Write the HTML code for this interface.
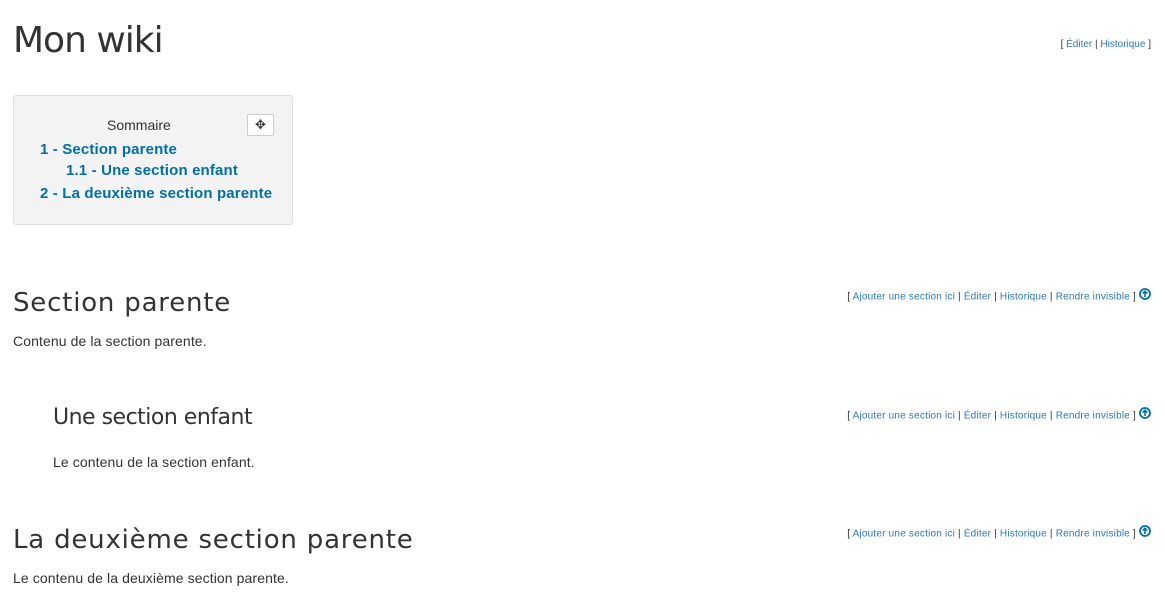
<!DOCTYPE html>
<html><head><meta charset="utf-8"><style>
body{margin:0;background:#fff;font-family:"Liberation Sans",sans-serif;color:#333;font-size:14px;width:1165px;height:603px;position:relative;overflow:hidden}
.a{position:absolute}
a{color:#0070a8;text-decoration:none}
h1,h2,h3{margin:0;font-family:"DejaVu Sans",sans-serif;font-weight:normal;color:#333;white-space:nowrap}
.act{position:absolute;right:14px;font-size:10px;letter-spacing:0.2px;color:#333;white-space:nowrap}
.act a{color:#2a7ab8}
.act svg{vertical-align:middle;position:relative;top:-3px}
.toc{position:absolute;left:13px;top:95px;width:278px;height:128px;background:#f3f3f3;border:1px solid #ddd;border-radius:3px}
.toc a{font-weight:bold;font-size:15px;letter-spacing:0.15px;position:absolute;white-space:nowrap}
</style></head><body>
<h1 class="a" style="left:13px;top:20px;font-size:36px;letter-spacing:-1px">Mon wiki</h1>
<div class="act" style="top:39px;letter-spacing:0">[ <a>Éditer</a> | <a>Historique</a> ]</div>
<div class="toc">
<div class="a" style="left:93px;top:21px;font-size:14px">Sommaire</div>
<div class="a" style="left:233px;top:18px;width:25px;height:20px;background:#fff;border:1px solid #ccc;border-radius:2px;text-align:center;font-size:13px;line-height:20px">✥</div>
<a style="left:26px;top:45px">1 - Section parente</a>
<a style="left:52px;top:66px">1.1 - Une section enfant</a>
<a style="left:26px;top:89px">2 - La deuxième section parente</a>
</div>
<h2 class="a" style="left:13px;top:288px;font-size:26px;letter-spacing:0.8px">Section parente</h2>
<div class="act" style="top:291px">[ <a>Ajouter une section ici</a> | <a>Éditer</a> | <a>Historique</a> | <a>Rendre invisible</a> ] <svg width="12" height="12" viewBox="0 0 12 12"><circle cx="6" cy="6" r="5" fill="none" stroke="#0070a8" stroke-width="1.8"/><path d="M6 9V3.5M3.7 5.6L6 3.3 8.3 5.6" fill="none" stroke="#0070a8" stroke-width="1.6"/></svg></div>
<div class="a" style="left:13px;top:333px;letter-spacing:0.1px">Contenu de la section parente.</div>
<h3 class="a" style="left:53px;top:405px;font-size:22px;letter-spacing:-0.5px">Une section enfant</h3>
<div class="act" style="top:410px">[ <a>Ajouter une section ici</a> | <a>Éditer</a> | <a>Historique</a> | <a>Rendre invisible</a> ] <svg width="12" height="12" viewBox="0 0 12 12"><circle cx="6" cy="6" r="5" fill="none" stroke="#0070a8" stroke-width="1.8"/><path d="M6 9V3.5M3.7 5.6L6 3.3 8.3 5.6" fill="none" stroke="#0070a8" stroke-width="1.6"/></svg></div>
<div class="a" style="left:53px;top:454px;letter-spacing:0.1px">Le contenu de la section enfant.</div>
<h2 class="a" style="left:13px;top:525px;font-size:26px;letter-spacing:0.8px">La deuxième section parente</h2>
<div class="act" style="top:528px">[ <a>Ajouter une section ici</a> | <a>Éditer</a> | <a>Historique</a> | <a>Rendre invisible</a> ] <svg width="12" height="12" viewBox="0 0 12 12"><circle cx="6" cy="6" r="5" fill="none" stroke="#0070a8" stroke-width="1.8"/><path d="M6 9V3.5M3.7 5.6L6 3.3 8.3 5.6" fill="none" stroke="#0070a8" stroke-width="1.6"/></svg></div>
<div class="a" style="left:13px;top:570px;letter-spacing:0.1px">Le contenu de la deuxième section parente.</div>
</body></html>
